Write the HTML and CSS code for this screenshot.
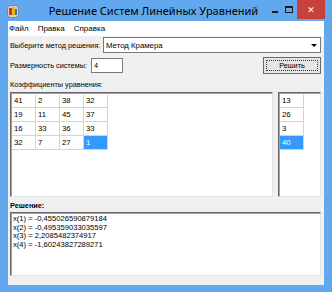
FILE: index.html
```html
<!DOCTYPE html>
<html lang="ru">
<head>
    <meta charset="UTF-8">
    <title>Решение Систем Линейных Уравнений</title>
    <link rel="stylesheet" href="styles.css">
</head>
<body>
    <div class="window">
        <div class="titlebar">
            <svg class="app-icon" width="12" height="13" viewBox="0 0 12 13">
                <rect x="0.5" y="0.5" width="11" height="12" rx="3" fill="#d9d2c4" stroke="#8a7f6c"/>
                <rect x="2" y="3" width="3" height="7" fill="#c0392b"/>
                <rect x="5" y="2" width="3" height="8" fill="#e6b422"/>
                <rect x="8" y="4" width="2" height="6" fill="#2f6fc0"/>
            </svg>
            <div class="title">Решение Систем Линейных Уравнений</div>
            <div class="caption-buttons">
                <span class="cap-btn minimize"><i></i></span>
                <span class="cap-btn maximize"><i></i></span>
                <span class="cap-btn close">✕</span>
            </div>
        </div>

        <div class="client">
            <div class="menubar">
                <span>Файл</span>
                <span>Правка</span>
                <span>Справка</span>
            </div>

            <div class="form">
                <div class="row method-row">
                    <label>Выберите метод решения:</label>
                    <div class="combo">
                        <span>Метод Крамера</span>
                        <span class="combo-arrow"></span>
                    </div>
                </div>

                <div class="row size-row">
                    <label>Размерность системы:</label>
                    <div class="edit">4</div>
                    <div class="button"><span>Решить</span></div>
                </div>

                <div class="caption">Коэффициенты уравнения:</div>

                <div class="grids">
                    <div class="grid-box matrix">
                        <div class="cells cols-4">
                            <div>41</div><div>2</div><div>38</div><div>32</div>
                            <div>19</div><div>11</div><div>45</div><div>37</div>
                            <div>16</div><div>33</div><div>36</div><div>33</div>
                            <div>32</div><div>7</div><div>27</div><div class="selected">1</div>
                        </div>
                    </div>
                    <div class="grid-box vector">
                        <div class="cells cols-1">
                            <div>13</div>
                            <div>26</div>
                            <div>3</div>
                            <div class="selected">40</div>
                        </div>
                    </div>
                </div>

                <div class="caption bold">Решение:</div>

                <div class="memo">
                    <div>x(1) = -0,455026590879184</div>
                    <div>x(2) = -0,495359033035597</div>
                    <div>x(3) = 2,2085482374917</div>
                    <div>x(4) = -1,60243827289271</div>
                </div>
            </div>
        </div>
    </div>
</body>
</html>
```

FILE: styles.css
```css
* {
    margin: 0;
    padding: 0;
    box-sizing: border-box;
}

body {
    width: 332px;
    height: 292px;
    overflow: hidden;
    font-family: 'Liberation Sans', Arial, sans-serif;
    font-size: 8px;
    color: #000;
}

.window {
    display: flex;
    flex-direction: column;
    width: 332px;
    height: 292px;
    background: #62a8ee;
}

/* title bar */
.titlebar {
    height: 21px;
    display: flex;
    align-items: center;
}

.app-icon {
    margin-left: 7px;
    margin-top: 1px;
}

.title {
    flex: 1;
    text-align: center;
    font-family: 'Noto Sans', sans-serif;
    font-size: 11px;
    color: #000;
    padding-left: 20px;
    padding-bottom: 1px;
}

.caption-buttons {
    display: flex;
    align-self: flex-start;
    margin-right: 7px;
}

.cap-btn {
    display: flex;
    justify-content: center;
    align-items: center;
    height: 20px;
}

.minimize {
    width: 14px;
}

.minimize i {
    width: 6px;
    height: 2px;
    background: #1a1a1a;
    margin-top: 3px;
}

.maximize {
    width: 14px;
    margin-right: 1px;
}

.maximize i {
    width: 8px;
    height: 7px;
    border: 1px solid #1a1a1a;
    border-top-width: 2px;
    margin-bottom: 2px;
}

.close {
    width: 28px;
    height: 19px;
    background: #c7403a;
    color: #fff;
    font-family: 'DejaVu Sans', sans-serif;
    font-size: 9px;
    font-weight: bold;
}

/* client area */
.client {
    flex: 1;
    margin: 0 8px 7px 8px;
    background: #f0f0f0;
    display: flex;
    flex-direction: column;
}

.menubar {
    height: 15px;
    background: #fff;
    display: flex;
    align-items: center;
    gap: 9px;
    padding-left: 1px;
}

.form {
    flex: 1;
    padding: 1px 3px 0 2px;
    display: flex;
    flex-direction: column;
    font-size: 7.3px;
}

.row {
    display: flex;
    align-items: center;
}

.row label {
    white-space: nowrap;
    flex: none;
}

.method-row {
    height: 16px;
    margin-top: 0;
}

.method-row label {
    width: 93px;
}

.combo {
    flex: 1;
    height: 16px;
    background: #fff;
    border: 1px solid #7a7a7a;
    display: flex;
    align-items: center;
    padding-left: 2px;
    font-size: 7.8px;
}

.combo span:first-child {
    flex: 1;
}

.combo-arrow {
    width: 7px;
    height: 7px;
    margin-right: 3px;
    display: flex;
    justify-content: center;
    align-items: center;
}

.combo-arrow::after {
    content: '';
    border-left: 3px solid transparent;
    border-right: 3px solid transparent;
    border-top: 3px solid #000;
}

.size-row {
    height: 18px;
    margin-top: 3px;
}

.size-row label {
    width: 81px;
}

.edit {
    width: 32px;
    height: 15px;
    background: #fff;
    border: 1px solid #7a7a7a;
    padding-left: 2px;
    line-height: 13px;
}

.button {
    margin-left: auto;
    width: 58px;
    height: 17px;
    border: 1px solid #6a6a6a;
    background: #e5e5e5;
    padding: 2px;
    display: flex;
}

.button span {
    flex: 1;
    border: 1px dotted #333;
    display: flex;
    justify-content: center;
    align-items: center;
}

.caption {
    margin-top: 6px;
    height: 9px;
    line-height: 9px;
    white-space: nowrap;
}

.bold {
    font-weight: bold;
    margin-top: 4px;
}

.grids {
    display: flex;
    gap: 5px;
    margin-top: 3px;
    height: 105px;
}

.grid-box {
    background: #fff;
    border-top: 1px solid #696969;
    border-left: 1px solid #696969;
    border-right: 1px solid #e3e3e3;
    border-bottom: 1px solid #e3e3e3;
    box-shadow: inset 1px 1px 0 #a0a0a0;
    padding: 1px 0 0 1px;
}

.matrix {
    width: 263px;
}

.vector {
    width: 43px;
}

.cells {
    display: grid;
    grid-auto-rows: 13px;
    gap: 1px;
    background: #d4d4d4;
    padding: 0 1px 1px 0;
    width: max-content;
}

.cols-4 {
    grid-template-columns: repeat(4, 23px);
}

.cols-1 {
    grid-template-columns: 23px;
}

.cells div {
    background: #fff;
    padding-left: 2px;
    line-height: 13px;
    font-size: 7.8px;
}

.cells .selected {
    background: #3399ff;
    color: #fff;
}

.memo {
    margin-top: 2px;
    height: 64px;
    background: #fff;
    border-top: 1px solid #696969;
    border-left: 1px solid #696969;
    border-right: 1px solid #e3e3e3;
    border-bottom: 1px solid #e3e3e3;
    box-shadow: inset 1px 1px 0 #a0a0a0;
    padding: 2px 0 0 2px;
    line-height: 8.6px;
    font-size: 7.6px;
}
```
